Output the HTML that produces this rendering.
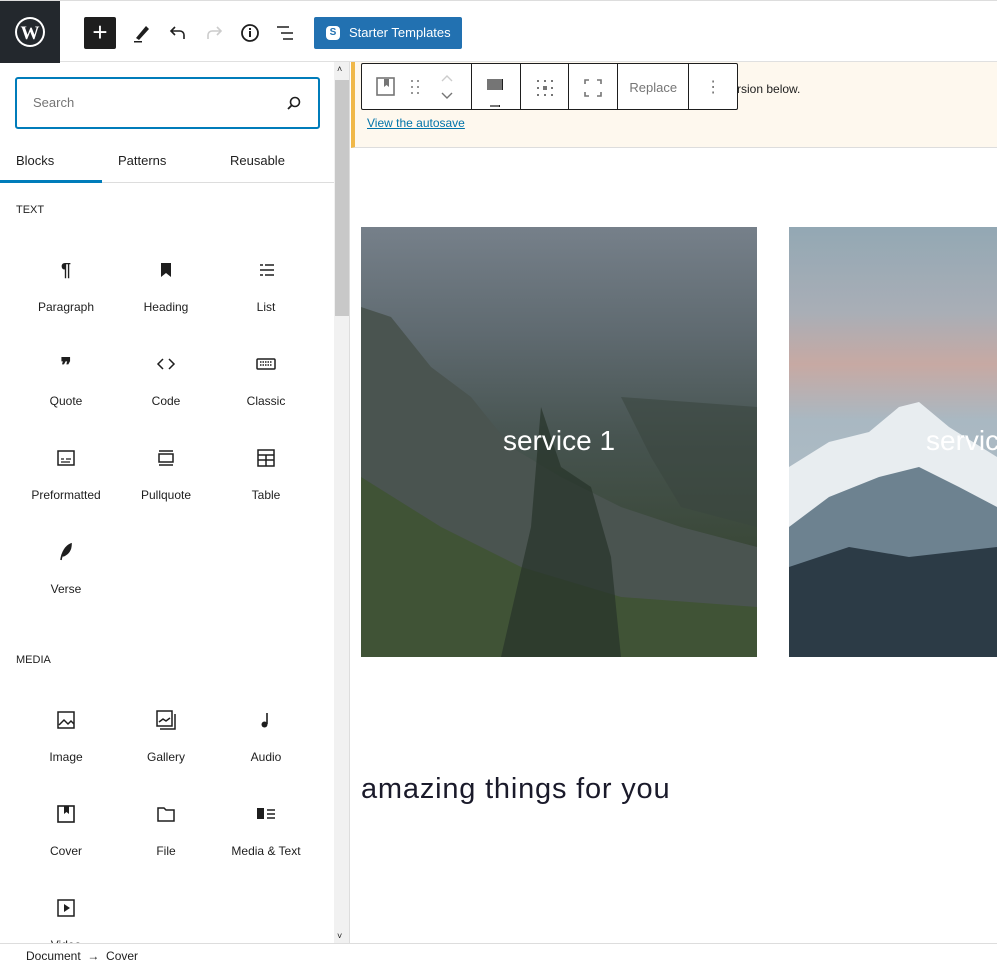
<!DOCTYPE html>
<html style="overflow:hidden;height:961px"><head><meta charset="utf-8"><style>
*{box-sizing:border-box;margin:0;padding:0}
body{width:997px;height:961px;overflow:hidden;background:#fff;font-family:"Liberation Sans",sans-serif;color:#1e1e1e;position:relative}
.top{position:absolute;left:0;top:0;width:997px;height:62px;border-bottom:1px solid #e0e0e0;border-top:1px solid #ddd}
.logo{position:absolute;left:0;top:0;width:60px;height:62px;background:#23282d}
.ab{position:absolute}
.side{position:absolute;left:0;top:62px;width:334px;height:881px;overflow:hidden}
.search{position:absolute;left:15px;top:15px;width:305px;height:52px;border:2px solid #007cba;border-radius:3px}
.search span{position:absolute;left:16px;top:16px;font-size:13px;color:#757575}
.tabs{position:absolute;top:90px;left:0;width:334px;height:31px;border-bottom:1px solid #ddd;font-size:13px}
.cat{position:absolute;left:16px;font-size:11px;color:#1e1e1e}
.item{position:absolute;width:100px;text-align:center;font-size:12px}
.item svg{display:block;margin:0 auto 20px}
.scroll{position:absolute;left:334px;top:62px;width:16px;height:881px;background:#f1f1f1;border-right:1px solid #ddd}
.bot{position:absolute;left:0;top:943px;width:997px;height:18px;border-top:1px solid #ddd;font-size:12px;padding:5px 0 0 26px;background:#fff;z-index:5}
.notice{position:absolute;left:351px;top:62px;width:646px;height:86px;background:#fef8ee;border-left:4px solid #f0b849;border-bottom:1px solid #ddd}
.tb{position:absolute;left:361px;top:63px;width:377px;height:47px;border:1px solid #1e1e1e;border-radius:2px;background:#fff;display:flex}
.tb div{border-right:1px solid #1e1e1e;height:100%;position:relative}
</style></head><body>
<div class="top">
 <div class="logo"><svg width="60" height="62" viewBox="0 0 60 62"><circle cx="30" cy="31" r="15" fill="#fff"/><circle cx="30" cy="31" r="13" fill="#23282d"/><text x="30" y="38" font-family="Liberation Serif" font-size="19" font-weight="bold" fill="#fff" text-anchor="middle">W</text></svg></div>
 <div class="ab" style="left:84px;top:16px;width:32px;height:32px;background:#1e1e1e;border-radius:2px;color:#fff;font-size:26px;line-height:30px;text-align:center">+</div>
 <svg class="ab" style="left:130px;top:20px" width="24" height="24"><path d="M6 17 L16 5 L19 8 L9 19Z" fill="#1e1e1e"/><rect x="4" y="20" width="8" height="1.5" fill="#1e1e1e"/></svg>
 <svg class="ab" style="left:166px;top:20px" width="24" height="24"><path d="M18 18v-4a4 4 0 0 0-4-4H5M9 6 5 10l4 4" stroke="#1e1e1e" stroke-width="1.6" fill="none"/></svg>
 <svg class="ab" style="left:202px;top:20px" width="24" height="24"><path d="M6 18v-4a4 4 0 0 1 4-4h9M15 6l4 4-4 4" stroke="#ccc" stroke-width="1.6" fill="none"/></svg>
 <svg class="ab" style="left:238px;top:20px" width="24" height="24"><circle cx="12" cy="12" r="8" stroke="#1e1e1e" stroke-width="1.8" fill="none"/><rect x="11" y="10" width="2" height="6" fill="#1e1e1e"/><rect x="11" y="7" width="2" height="2" fill="#1e1e1e"/></svg>
 <svg class="ab" style="left:274px;top:20px" width="24" height="24"><path d="M3 6h12M7 12h12M9 18h10" stroke="#1e1e1e" stroke-width="1.6"/></svg>
 <div class="ab" style="left:314px;top:16px;width:148px;height:32px;background:#2271b1;border-radius:2px;color:#fff;font-size:13px;line-height:32px;padding-left:35px">Starter Templates<span style="position:absolute;left:12px;top:9px;width:14px;height:14px;background:#fff;border-radius:4px;color:#2271b1;font-size:10px;line-height:14px;text-align:center;font-weight:bold">S</span></div>
</div>
<div class="side">
 <div class="search"><span>Search</span><svg style="position:absolute;right:16px;top:16px" width="16" height="16"><circle cx="9" cy="7" r="4.5" stroke="#1e1e1e" stroke-width="1.6" fill="none"/><path d="M6 10 2 14" stroke="#1e1e1e" stroke-width="1.8"/></svg></div>
 <div class="tabs"><span class="ab" style="left:16px;top:1px">Blocks</span><span class="ab" style="left:118px;top:1px">Patterns</span><span class="ab" style="left:230px;top:1px">Reusable</span><div class="ab" style="left:0;top:28px;width:102px;height:3px;background:#007cba"></div></div>
 <div class="cat" style="top:142px">TEXT</div>
 <div class="cat" style="top:592px">MEDIA</div>
</div>
<div id="items"></div>
<div class="scroll"><div style="position:absolute;left:1px;top:18px;width:14px;height:236px;background:#c8c8c8"></div><div style="position:absolute;left:3px;top:2px;font-size:9px">˄</div><div style="position:absolute;left:3px;bottom:2px;font-size:9px">˅</div></div>
<div class="notice"><span class="ab" style="left:382px;top:20px;font-size:12px">rsion below.</span><span class="ab" style="left:12px;top:54px;font-size:12px;color:#0073aa;text-decoration:underline">View the autosave</span></div>
<div class="tb">
 <div style="width:110px"><svg class="ab" style="left:14px;top:13px" width="20" height="20"><rect x="1" y="1" width="17" height="17" stroke="#757575" stroke-width="1.6" fill="none"/><path d="M8 2v8l2.5-2 2.5 2V2" fill="#757575"/></svg><svg class="ab" style="left:48px;top:15px" width="10" height="16"><g fill="#757575"><circle cx="2" cy="2" r="1"/><circle cx="8" cy="2" r="1"/><circle cx="2" cy="8" r="1"/><circle cx="8" cy="8" r="1"/><circle cx="2" cy="14" r="1"/><circle cx="8" cy="14" r="1"/></g></svg><svg class="ab" style="left:78px;top:10px" width="14" height="26"><path d="M2 7l5-5 5 5" stroke="#ccc" stroke-width="1.4" fill="none"/><path d="M2 19l5 5 5-5" stroke="#757575" stroke-width="1.4" fill="none"/></svg></div>
 <div style="width:49px"><div class="ab" style="left:15px;top:15px;width:16px;height:11px;background:#757575"></div><div class="ab" style="left:18px;top:30px;width:10px;height:1.5px;background:#757575"></div></div>
 <div style="width:49px"><svg class="ab" style="left:15px;top:15px" width="18" height="18"><g fill="#757575"><rect x="1" y="1" width="2" height="2"/><rect x="8" y="1" width="2" height="2"/><rect x="15" y="1" width="2" height="2"/><rect x="1" y="8" width="2" height="2"/><rect x="7" y="7" width="4" height="4"/><rect x="15" y="8" width="2" height="2"/><rect x="1" y="15" width="2" height="2"/><rect x="8" y="15" width="2" height="2"/><rect x="15" y="15" width="2" height="2"/></g></svg></div>
 <div style="width:49px"><svg class="ab" style="left:15px;top:15px" width="18" height="18"><path d="M1 5V1h4M13 1h4v4M17 13v4h-4M5 17H1v-4" stroke="#757575" stroke-width="1.6" fill="none"/></svg></div>
 <div style="width:71px;font-size:13px;color:#757575;line-height:47px;text-align:center">Replace</div>
 <div style="width:48px;border:none;color:#757575;text-align:center;line-height:47px;font-size:16px">⋮</div>
</div>
<div class="ab" style="left:361px;top:227px;width:396px;height:430px;overflow:hidden;background:linear-gradient(180deg,#76808a 0%,#5f6a70 25%,#46534f 50%,#3a4838 75%,#2f3d2b 100%)">
 <svg width="396" height="430" style="position:absolute;left:0;top:0"><path d="M0 80 L30 90 L70 140 L110 170 L150 220 L200 250 L260 280 L320 300 L396 320 L396 430 L0 430Z" fill="#4a5450"/><path d="M0 250 L80 300 L160 340 L260 370 L396 380 L396 430 L0 430Z" fill="#3d5230" opacity=".8"/><path d="M180 180 L200 240 L230 260 L250 330 L260 430 L140 430 L170 300Z" fill="#26332a" opacity=".7"/><path d="M260 170 L290 230 L320 280 L396 300 L396 180Z" fill="#3a4640" opacity=".6"/></svg>
</div>
<div class="ab" style="left:361px;top:425px;width:396px;text-align:center;color:#fff;font-size:28px">service 1</div>
<div class="ab" style="left:789px;top:227px;width:208px;height:430px;overflow:hidden;background:linear-gradient(180deg,#93a8b4 0%,#a9aeb6 20%,#c7a9a3 32%,#a9b8c2 45%,#b8c4cc 100%)">
 <svg width="208" height="430" style="position:absolute;left:0;top:0"><path d="M0 240 L40 215 L80 205 L110 180 L130 175 L160 200 L208 230 L208 430 L0 430Z" fill="#e8edf0"/><path d="M0 300 L40 270 L90 250 L130 240 L170 260 L208 280 L208 430 L0 430Z" fill="#6d8290"/><path d="M0 340 L60 320 L120 330 L208 320 L208 430 L0 430Z" fill="#2c3b46"/></svg>
</div>
<div class="ab" style="left:926px;top:425px;color:#fff;font-size:28px">servic</div>
<div class="ab" style="left:361px;top:773px;font-size:29px;letter-spacing:0.8px;color:#1a1a2a">amazing things for you</div>
<div class="bot">Document &nbsp;→&nbsp; Cover</div>
<script>
const I={
p:'<text x="10" y="16" font-size="18" font-weight="bold" text-anchor="middle" fill="#1e1e1e">¶</text>',
h:'<path d="M5 3h10v14l-5-4-5 4z" fill="#1e1e1e"/>',
l:'<path d="M4 5h3M9 5h9M4 10h14M4 15h3M9 15h9" stroke="#1e1e1e" stroke-width="1.5"/>',
q:'<text x="10" y="18" font-size="20" font-weight="bold" text-anchor="middle" fill="#1e1e1e">❞</text>',
c:'<path d="M7 5 2 10l5 5M13 5l5 5-5 5" stroke="#1e1e1e" stroke-width="1.5" fill="none"/>',
k:'<rect x="1" y="5" width="18" height="10" rx="1" stroke="#1e1e1e" stroke-width="1.5" fill="none"/><path d="M4 8h12M4 11h12" stroke="#1e1e1e" stroke-dasharray="1.5 1" stroke-width="1.5"/>',
pr:'<rect x="2" y="3" width="16" height="14" stroke="#1e1e1e" stroke-width="1.5" fill="none"/><path d="M5 11h3M10 11h5M5 14h9" stroke="#1e1e1e" stroke-width="1.3"/>',
pq:'<path d="M3 3h14M3 17h14" stroke="#1e1e1e" stroke-width="1.5"/><rect x="3" y="6" width="14" height="8" stroke="#1e1e1e" stroke-width="1.5" fill="none"/>',
t:'<rect x="2" y="2" width="16" height="16" stroke="#1e1e1e" stroke-width="1.5" fill="none"/><path d="M2 7h16M2 12h16M10 7v11" stroke="#1e1e1e" stroke-width="1.5"/>',
v:'<path d="M5 18C6 10 10 4 15 2c0 6-3 10-8 12" stroke="#1e1e1e" stroke-width="1.6" fill="#1e1e1e"/>',
im:'<rect x="2" y="2" width="16" height="16" stroke="#1e1e1e" stroke-width="1.5" fill="none"/><path d="M3 15l5-5 4 4 3-3 3 3" stroke="#1e1e1e" stroke-width="1.5" fill="none"/>',
g:'<rect x="1" y="1" width="15" height="15" stroke="#1e1e1e" stroke-width="1.5" fill="none"/><path d="M3 12l4-3 3 2 4-3M19 4v15H4" stroke="#1e1e1e" stroke-width="1.5" fill="none"/>',
a:'<path d="M11 3v11" stroke="#1e1e1e" stroke-width="1.6"/><circle cx="8.5" cy="14.5" r="3" fill="#1e1e1e"/>',
cv:'<rect x="2" y="2" width="16" height="16" stroke="#1e1e1e" stroke-width="1.6" fill="none"/><path d="M8 2v8l2.5-2 2.5 2V2" fill="#1e1e1e"/>',
f:'<path d="M2 4h6l2 2h8v11H2z" stroke="#1e1e1e" stroke-width="1.5" fill="none"/>',
mt:'<rect x="1" y="4" width="7" height="11" fill="#1e1e1e"/><path d="M11 6h8M11 10h8M11 14h8" stroke="#1e1e1e" stroke-width="1.5"/>',
vi:'<rect x="2" y="2" width="16" height="16" stroke="#1e1e1e" stroke-width="1.5" fill="none"/><path d="M8 6v8l6-4z" fill="#1e1e1e"/>'};
const L=[['p','Paragraph',0,0],['h','Heading',1,0],['l','List',2,0],['q','Quote',0,1],['c','Code',1,1],['k','Classic',2,1],['pr','Preformatted',0,2],['pq','Pullquote',1,2],['t','Table',2,2],['v','Verse',0,3],
['im','Image',0,5],['g','Gallery',1,5],['a','Audio',2,5],['cv','Cover',0,6],['f','File',1,6],['mt','Media & Text',2,6],['vi','Video',0,7]];
let h='';
for(const [k,n,c,r] of L){const top=r<5?260+r*94:710+(r-5)*94;
h+=`<div class="item" style="left:${16+c*100}px;top:${top}px">${'<svg width="20" height="20">'+I[k]+'</svg>'}${n}</div>`;}
document.getElementById('items').innerHTML=h;
</script>
</body></html>
